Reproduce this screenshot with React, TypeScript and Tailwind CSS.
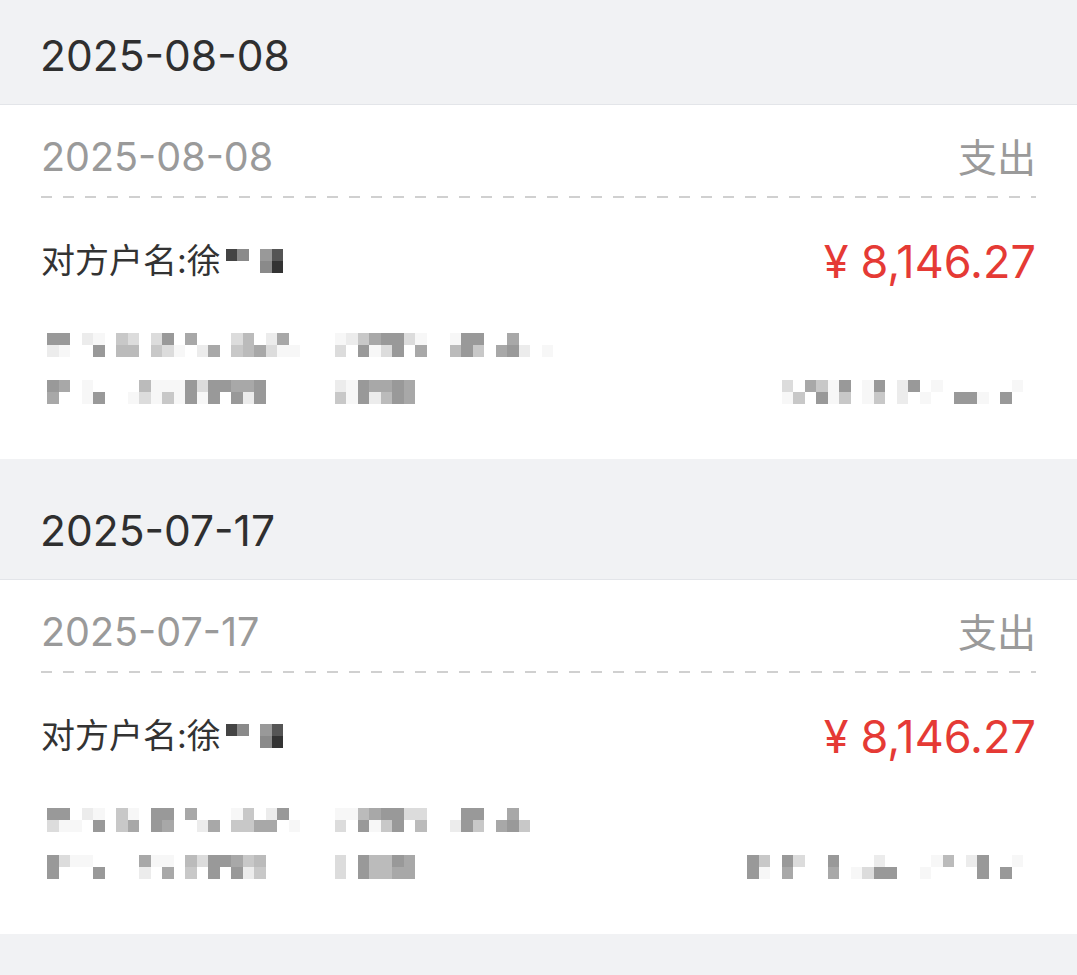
const shade: Record<string, string> = {
  '3': 'bg-[#333333]',
  '4': 'bg-[#444444]',
  '5': 'bg-[#555555]',
  '8': 'bg-[#8a8a8a]',
  '9': 'bg-[#999999]',
  a: 'bg-[#a8a8a8]',
  b: 'bg-[#bbbbbb]',
  c: 'bg-[#c8c8c8]',
  d: 'bg-[#dcdcdc]',
  e: 'bg-[#ececec]',
  f: 'bg-[#f7f7f7]',
  '-': 'bg-transparent',
};

interface Record_ {
  date: string;
  kind: string;
  name: string;
  amount: string;
  nameMask: string[];
  lineA: string[];
  lineB: string[];
  lineC: string[];
}

const records: Record_[] = [
  {
    date: '2025-08-08',
    kind: '支出',
    name: '对方户名:徐',
    amount: '8,146.27',
    nameMask: ['48-95', '---83'],
    lineA: [
      '99-ef-cd-d9-a---db-ea----feca99df--f99--a---',
      'ef--9-bb-cdf-ea-cbadff---d-9fd9-a--b9c-a9e-f',
    ],
    lineB: ['9a-f----bfff9d99aa9------ef9aa9a', 'a--f9--fdfcf9f9-9e9------cf9eb9a'],
    lineC: ['d-acf9-f9-e9-f------f', 'fc-9fc-fc-e-f--99f-9-'],
  },
  {
    date: '2025-07-17',
    kind: '支出',
    name: '对方户名:徐',
    amount: '8,146.27',
    nameMask: ['48-95', '---83'],
    lineA: [
      '99-ef-cf-99-a---fc-e9----ffba99dd---99--a---',
      'dff-9-ca-9a--ea-ccaa-f---d-9fc9-b--e9c-a9c--',
    ],
    lineB: ['9dff----aff-bd99acb------d-9bb9a', '9---9---e-a-c-9-9ec------d-9bbaa'],
    lineC: ['9c-9d--9---e----fb-e9--f', '9f-a---a-fd99--f----9-9-'],
  },
];

function Mosaic({ rows }: { rows: string[] }) {
  return (
    <div className="flex flex-col">
      {rows.map((row, i) => (
        <div key={i} className="flex">
          {row.split('').map((c, j) => (
            <span key={j} className={`h-[12px] w-[11.5px] shrink-0 ${shade[c]}`} />
          ))}
        </div>
      ))}
    </div>
  );
}

function DayGroup({ rec }: { rec: Record_ }) {
  return (
    <section>
      <div className="flex h-[105px] items-center border-b border-[#e3e5e9] pl-[40px] pt-[8px] text-[42.5px] leading-none text-[#2f2f2f]">
        {rec.date}
      </div>
      <div className="h-[354px] bg-white px-[41px]">
        <div className="flex h-[91px] items-center justify-between pt-[14px]">
          <span className="text-[39.5px] leading-none text-[#9a9a9a]">{rec.date}</span>
          <span className="text-[39px] leading-none text-[#9a9a9a]">{rec.kind}</span>
        </div>
        <div className="h-[2px] bg-[repeating-linear-gradient(90deg,#d0d0d0_0_11px,transparent_11px_22px)]" />
        <div className="flex h-[126px] items-center justify-between">
          <div className="flex items-center">
            <span className="text-[34px] leading-none text-[#333333]">{rec.name}</span>
            <div className="ml-[5px]">
              <Mosaic rows={rec.nameMask} />
            </div>
          </div>
          <div className="flex items-center text-[45px] leading-none text-[#e53a35]">
            <span className="mr-[12px]">¥</span>
            <span>{rec.amount}</span>
          </div>
        </div>
        <div className="ml-[6px] mt-[9px]">
          <Mosaic rows={rec.lineA} />
        </div>
        <div className="mt-[23px] flex items-start justify-between">
          <div className="ml-[6px]">
            <Mosaic rows={rec.lineB} />
          </div>
          <div className="mr-[13px]">
            <Mosaic rows={rec.lineC} />
          </div>
        </div>
      </div>
    </section>
  );
}

export default function App() {
  return (
    <div className="min-h-screen w-full bg-[#f1f2f4] font-['Inter','Noto_Sans_CJK_SC',sans-serif]">
      <div className="flex flex-col gap-[16px]">
        {records.map(rec => (
          <DayGroup key={rec.date} rec={rec} />
        ))}
      </div>
    </div>
  );
}
